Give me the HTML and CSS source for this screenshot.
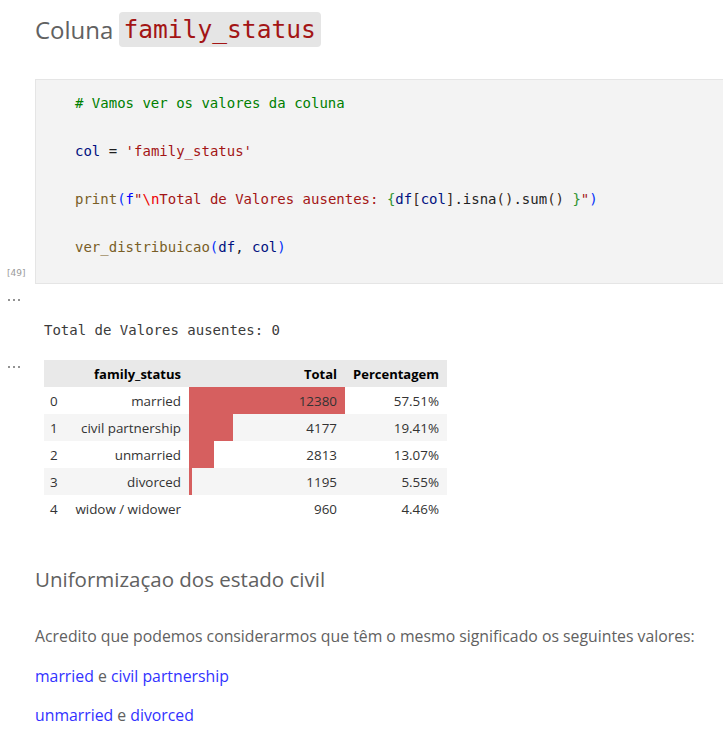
FILE: index.html
```html
<!DOCTYPE html>
<html lang="pt">
<head>
<meta charset="utf-8">
<title>family_status</title>
<link rel="stylesheet" href="styles.css">
</head>
<body>
<div class="page">
  <section class="md md-top">
    <h2 class="title">Coluna <code class="inline-code">family_status</code></h2>
  </section>

  <section class="cell">
    <div class="gutter"><span class="exec-count">[49]</span></div>
    <div class="editor">
<pre class="code"><span class="c-com"># Vamos ver os valores da coluna</span>

<span class="c-var">col</span> = <span class="c-str">'family_status'</span>

<span class="c-fn">print</span><span class="b1">(</span><span class="c-kw">f</span><span class="c-str">"</span><span class="c-esc">\n</span><span class="c-str">Total de Valores ausentes: </span><span class="b2">{</span><span class="c-var">df</span><span class="b3">[</span><span class="c-var">col</span><span class="b3">]</span>.<span class="c-fn2">isna</span><span class="b3">()</span>.<span class="c-fn2">sum</span><span class="b3">()</span> <span class="b2">}</span><span class="c-str">"</span><span class="b1">)</span>

<span class="c-fn">ver_distribuicao</span><span class="b1">(</span><span class="c-var">df</span>, <span class="c-var">col</span><span class="b1">)</span></pre>
    </div>
  </section>

  <section class="output out-text">
    <div class="out-gutter"><svg class="dots" width="14" height="4" viewBox="0 0 14 4"><circle cx="2" cy="2" r="1" /><circle cx="7" cy="2" r="1" /><circle cx="12" cy="2" r="1" /></svg></div>
    <pre class="stdout">Total de Valores ausentes: 0</pre>
  </section>

  <section class="output out-table">
    <div class="out-gutter"><svg class="dots" width="14" height="4" viewBox="0 0 14 4"><circle cx="2" cy="2" r="1" /><circle cx="7" cy="2" r="1" /><circle cx="12" cy="2" r="1" /></svg></div>
    <table class="df">
      <thead>
        <tr><th class="idx"></th><th class="fs">family_status</th><th class="tot">Total</th><th class="pct">Percentagem</th></tr>
      </thead>
      <tbody>
        <tr><td class="idx">0</td><td class="fs">married</td><td class="tot bar" style="--w:100%">12380</td><td class="pct">57.51%</td></tr>
        <tr><td class="idx">1</td><td class="fs">civil partnership</td><td class="tot bar" style="--w:28.17%">4177</td><td class="pct">19.41%</td></tr>
        <tr><td class="idx">2</td><td class="fs">unmarried</td><td class="tot bar" style="--w:16.23%">2813</td><td class="pct">13.07%</td></tr>
        <tr><td class="idx">3</td><td class="fs">divorced</td><td class="tot bar" style="--w:2.06%">1195</td><td class="pct">5.55%</td></tr>
        <tr><td class="idx">4</td><td class="fs">widow / widower</td><td class="tot bar" style="--w:0%">960</td><td class="pct">4.46%</td></tr>
      </tbody>
    </table>
  </section>

  <section class="md md-bottom">
    <h3 class="subtitle">Uniformizaçao dos estado civil</h3>
    <p class="para">Acredito que podemos considerarmos que têm o mesmo significado os seguintes valores:</p>
    <p class="para"><span class="link">married</span> e <span class="link">civil partnership</span></p>
    <p class="para"><span class="link">unmarried</span> e <span class="link">divorced</span></p>
  </section>
</div>
</body>
</html>
```

FILE: styles.css
```css
html, body {
  margin: 0;
  padding: 0;
  background: #ffffff;
  overflow: hidden;
}

body {
  font-family: "Open Sans", "Noto Sans", sans-serif;
  color: #616161;
  width: 723px;
  height: 732px;
}

.page {
  display: flex;
  flex-direction: column;
}

/* ---------- markdown top ---------- */
.md-top {
  padding: 12px 0 0 35px;
}

.title {
  margin: 0;
  font-weight: 400;
  font-size: 24px;
  line-height: 35px;
  color: #616161;
  display: flex;
  align-items: center;
  gap: 6px;
}

.inline-code {
  font-family: "DejaVu Sans Mono", monospace;
  font-size: 24.6px;
  color: #a31515;
  background: #e5e5e5;
  border-radius: 4px;
  padding: 0 5px 0 4px;
  line-height: 35px;
}

/* ---------- code cell ---------- */
.cell {
  display: flex;
  margin-top: 32px;
  height: 205px;
}

.gutter {
  width: 35px;
  flex: none;
  display: flex;
  align-items: flex-end;
}

.exec-count {
  font-family: "DejaVu Sans", sans-serif;
  font-size: 9px;
  color: #9a9a9a;
  margin: 0 0 6px 7px;
}

.editor {
  flex: 1;
  background: #f3f3f3;
  border: 1px solid #e5e5e5;
  border-right: none;
  margin-right: -20px;
  box-sizing: border-box;
  padding: 11px 0 0 39px;
}

.code {
  margin: 0;
  font-family: "DejaVu Sans Mono", monospace;
  font-size: 14px;
  line-height: 24px;
  color: #1f1f1f;
}

.c-com { color: #008000; }
.c-str { color: #a31515; }
.c-esc { color: #ee0000; }
.c-kw  { color: #0000ff; }
.c-fn  { color: #795e26; }
.c-fn2 { color: #1f1f1f; }
.c-var { color: #001080; }
.b1 { color: #0431fa; }
.b2 { color: #319331; }
.b3 { color: #3b2a1a; }

/* ---------- outputs ---------- */
.output {
  display: flex;
}

.out-gutter {
  width: 44px;
  flex: none;
  display: flex;
  justify-content: flex-start;
  padding-left: 7px;
  box-sizing: border-box;
}

.dots {
  fill: #6f6f6f;
}

.out-text {
  margin-top: 14px;
}

.stdout {
  margin: 22px 0 0 0;
  font-family: "DejaVu Sans Mono", monospace;
  font-size: 14px;
  line-height: 20px;
  color: #3b3b3b;
}

.out-table {
  margin-top: 20px;
}

.out-table .out-gutter {
  padding-top: 5px;
}

/* ---------- dataframe ---------- */
.df {
  border-collapse: collapse;
  font-family: "Open Sans", "Noto Sans", sans-serif;
  font-size: 13.4px;
  color: #333333;
  table-layout: fixed;
  width: 403px;
}

.df th, .df td {
  height: 27px;
  padding: 0 8px;
  box-sizing: border-box;
  text-align: right;
  white-space: nowrap;
}

.df thead tr {
  background: #e9e9e9;
}

.df th {
  font-weight: 700;
  font-size: 13px;
  color: #000000;
}

.df tbody tr:nth-child(even) {
  background: #f5f5f5;
}

.df .idx { width: 23px; text-align: left; padding: 0 0 0 6px; }
.df .fs  { width: 122px; }
.df .tot { width: 156px; }
.df .pct { width: 102px; }

.df td.bar {
  background: linear-gradient(90deg, #d65f5f var(--w), transparent var(--w));
}

/* ---------- markdown bottom ---------- */
.md-bottom {
  padding: 43px 0 0 35px;
}

.subtitle {
  margin: 0;
  font-weight: 400;
  font-size: 20.5px;
  line-height: 28px;
  color: #616161;
}

.para {
  margin: 0;
  font-size: 15.8px;
  line-height: 22px;
  color: #616161;
}

.subtitle + .para {
  margin-top: 32px;
}

.para + .para {
  margin-top: 17.5px;
}

.link {
  color: #3232ff;
}
```
